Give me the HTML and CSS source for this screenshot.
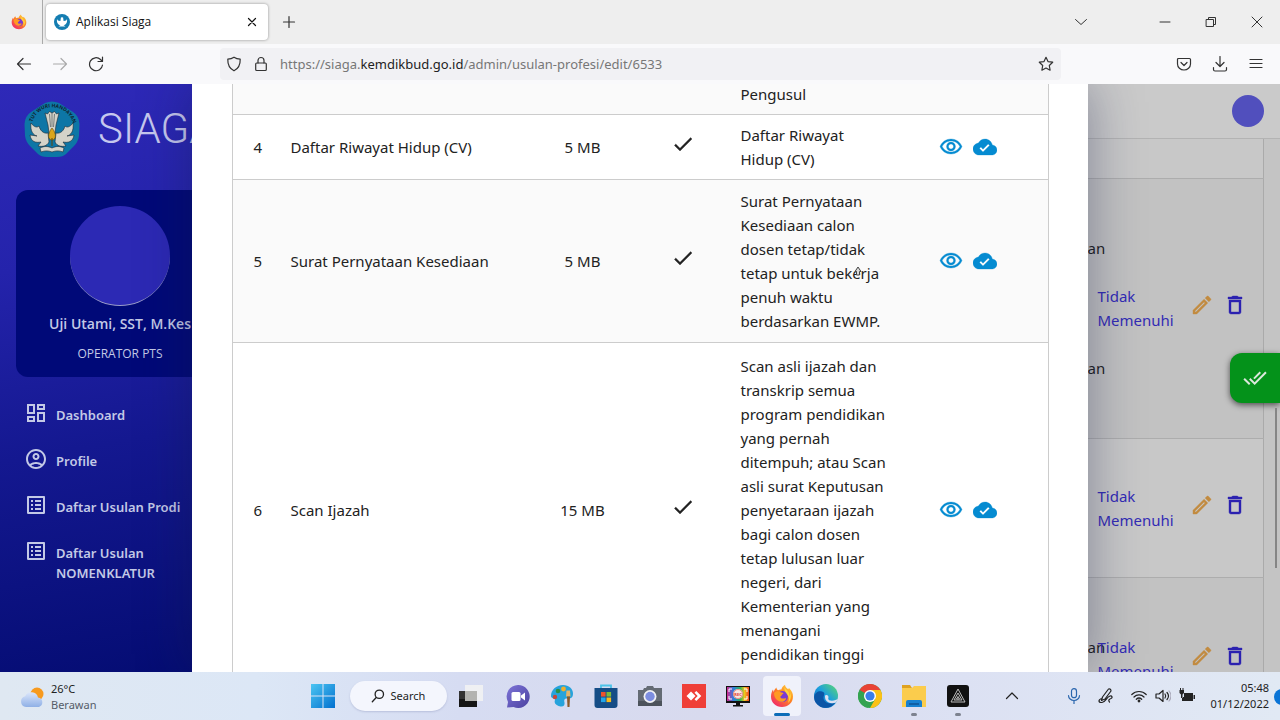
FILE: index.html
```html
<!DOCTYPE html>
<html lang="id">
<head>
<meta charset="utf-8">
<title>Aplikasi Siaga</title>
<link rel="stylesheet" href="styles.css">
</head>
<body>
<svg class="defs" aria-hidden="true">
  <defs>
    <linearGradient id="g-fire" x1="1" y1="0" x2="0.2" y2="1"><stop offset="0" stop-color="#ffe14a"/><stop offset=".45" stop-color="#ff8a1f"/><stop offset="1" stop-color="#f0256b"/></linearGradient>
    <linearGradient id="g-win" x1="0" y1="0" x2="1" y2="1"><stop offset="0" stop-color="#4cc5f2"/><stop offset="1" stop-color="#0270cf"/></linearGradient>
    <linearGradient id="g-edge" x1="0" y1="1" x2="1" y2="0"><stop offset="0" stop-color="#0c4fa5"/><stop offset=".5" stop-color="#1b9de0"/><stop offset="1" stop-color="#5fdc6a"/></linearGradient>
    <linearGradient id="g-chat" x1="0" y1="0" x2="1" y2="1"><stop offset="0" stop-color="#7d74d8"/><stop offset="1" stop-color="#4b419f"/></linearGradient>
    <linearGradient id="g-cloud" x1="0" y1="0" x2="0" y2="1"><stop offset="0" stop-color="#dbe6fb"/><stop offset="1" stop-color="#8fb0e6"/></linearGradient>
    <linearGradient id="g-rec" x1="0" y1="0" x2="1" y2="0"><stop offset="0" stop-color="#d42a8f"/><stop offset=".3" stop-color="#2c7fe0"/><stop offset=".6" stop-color="#2fb457"/><stop offset=".8" stop-color="#f4c51c"/><stop offset="1" stop-color="#ee4425"/></linearGradient>
    <symbol id="firefox" viewBox="0 0 24 24">
      <path fill="url(#g-fire)" d="M12 23C5.700 23 1 18.500 1 12.500c0-3 1-5.500 2-7l.6 2.500C4.300 6 5.500 4.300 6.500 3.500c0 1.300.6 2.200 1.600 2.700 1-.5 2-.7 3.300-.6C12 3.500 13 2 15 .8c0 2 1.500 3 3.200 4.500L19 4c3 3 4 5.500 4 8.500C23 18.500 18.300 23 12 23z"/>
      <circle cx="12.500" cy="12.500" r="5.500" fill="#7a3ad3"/>
      <path fill="#ff9a22" d="M4 9c2-2 5-2.500 7-.5 1.500 0 2.500.5 2.500 1.200-1 .3-1.800 1-2 2-1.500.3-1.500 1.800-.3 2.500 1.800 1 3.500-.2 5 .2-1 2.500-3.500 4-6.200 3.200C6.500 16.500 4 13 4 9z"/>
      <path fill="#ffd23e" d="M14.500 3c.5 2.500 5.500 4 5 9 1-1.500 1-3 .5-4.500 2 4 1 9-2 11.500 2-5 0-7.500-1.500-9.500C15 7.500 14 5.500 14.500 3z"/>
    </symbol>
    <symbol id="crest" viewBox="0 0 56 56">
      <path fill="#0d76a6" d="M21 2Q28-1 35 2L49 11Q55 15 55.500 23L55 35Q54 41 50 45L42 53Q39 56 33 56H23Q17 56 14 53L6 45Q2 41 1 35L.500 23Q1 15 7 11z"/>
      <path id="motto" fill="none" d="M8 22C14 1 42 1 49 22"/>
      <text font-size="5" font-weight="700" font-family="Open Sans, sans-serif" fill="#10222d"><textPath href="#motto" startOffset="1">TUT WURI HANDAYANI</textPath></text>
      <g fill="#d4d3c9" stroke="#1b2630" stroke-width=".6">
        <path d="M21 12l2.500 1 2-2.500 2.500 1.500 2.500-1.500 2 2.500 2.500-1-3 12-1 8h-6l-1-8z"/>
        <path d="M24 32c-5 1-8-3-9-7-2 2-5 1-8-3-1 8 2 12 6 13l-7-1c1 7 6 8 11 7l-3 4c5 1 9 0 11-4z"/>
        <path d="M32 32c5 1 8-3 9-7 2 2 5 1 8-3 1 8-2 12-6 13l7-1c-1 7-6 8-11 7l3 4c-5 1-9 0-11-4z"/>
        <path d="M16 47c4-2 8-2 12 0 4-2 8-2 12 0l-1 4c-4-1.500-7-1.500-11 0-4-1.500-7-1.500-11 0z"/>
      </g>
      <path stroke="#1b2630" stroke-width=".5" d="M25.500 13l1 13M28 12v14M30.500 13l-1 13" />
      <path fill="#d9a51c" stroke="#604708" stroke-width=".6" d="M28 27c5 6 4 12 0 12s-5-6 0-12z"/>
      <path stroke="#604708" d="M28 37v8"/>
    </symbol>
    <symbol id="crest-mini" viewBox="0 0 16 16"><circle cx="8" cy="8" r="8" fill="#147db1"/><path fill="#fff" d="M7 3l1 .8L9 3l.6 4C12 7 12.500 6 13 5c.6 4-1.500 6-3.500 6l2 1.500H4.500l2-1.500C4.500 11 2.400 9 3 5c.5 1 1 2 3.400 2z"/></symbol>
    <symbol id="check" viewBox="0 0 24 24"><path d="M9 16.200L4.800 12l-1.400 1.400L9 19 21 7l-1.400-1.400z"/></symbol>
    <symbol id="eye" viewBox="0 0 24 24"><path d="M12 6c3.790 0 7.170 2.130 8.820 5.500C19.170 14.870 15.790 17 12 17s-7.170-2.130-8.820-5.500C4.830 8.130 8.210 6 12 6m0-2C7 4 2.730 7.110 1 11.500 2.730 15.890 7 19 12 19s9.270-3.110 11-7.500C21.270 7.110 17 4 12 4zm0 5c1.380 0 2.500 1.120 2.500 2.500S13.380 14 12 14s-2.500-1.120-2.500-2.500S10.620 9 12 9m0-2c-2.480 0-4.500 2.020-4.500 4.500S9.520 16 12 16s4.500-2.020 4.500-4.500S14.480 7 12 7z"/></symbol>
    <symbol id="cloud" viewBox="0 0 24 24"><path d="M19.350 10.040C18.670 6.590 15.640 4 12 4 9.110 4 6.600 5.640 5.350 8.040 2.340 8.360 0 10.910 0 14c0 3.310 2.690 6 6 6h13c2.760 0 5-2.240 5-5 0-2.640-2.050-4.780-4.650-4.960zM10 17l-3.500-3.500 1.410-1.410L10 14.170 15.180 9l1.410 1.410L10 17z"/></symbol>
    <symbol id="pencil" viewBox="0 0 24 24"><path d="M14.060 9.020l.92.920L5.920 19H5v-.92l9.060-9.060M17.660 3c-.25 0-.51.1-.7.290l-1.830 1.830 3.750 3.750 1.830-1.830c.39-.39.39-1.020 0-1.410l-2.340-2.340c-.2-.2-.45-.29-.71-.29zm-3.600 3.190L3 17.250V21h3.750L17.810 9.940l-3.750-3.750z"/></symbol>
    <symbol id="trash" viewBox="0 0 24 24"><path d="M6 19c0 1.100.9 2 2 2h8c1.100 0 2-.9 2-2V7H6v12zM8 9h8v10H8V9zm7.500-5l-1-1h-5l-1 1H5v2h14V4z"/></symbol>
    <symbol id="list" viewBox="0 0 24 24"><path d="M19 5v14H5V5h14m1.100-2H3.900c-.5 0-.9.400-.9.900v16.200c0 .4.400.9.900.9h16.200c.4 0 .9-.5.900-.9V3.900c0-.5-.5-.9-.9-.9zM11 7h6v2h-6V7zm0 4h6v2h-6v-2zm0 4h6v2h-6zM7 7h2v2H7zm0 4h2v2H7zm0 4h2v2H7z"/></symbol>
  </defs>
</svg>

<header class="tabstrip">
  <button class="pinned" aria-label="Firefox View"><svg class="i16"><use href="#firefox"/></svg></button>
  <div class="tab">
    <svg class="i16"><use href="#crest-mini"/></svg>
    <span class="tab-title">Aplikasi Siaga</span>
    <button class="tab-close" aria-label="Tutup tab"><svg class="line i16" viewBox="0 0 16 16"><path d="M4.500 4.500l7 7M11.500 4.500l-7 7"/></svg></button>
  </div>
  <button class="newtab" aria-label="Tab baru"><svg class="line i16" viewBox="0 0 16 16"><path d="M8 2.500v11M2.500 8h11"/></svg></button>
  <div class="window-controls">
    <button class="all-tabs" aria-label="Daftar tab"><svg class="line i16" viewBox="0 0 16 16"><path d="M2.500 5.500L8 10.500l5.500-5"/></svg></button>
    <button aria-label="Kecilkan"><svg class="line i16" viewBox="0 0 16 16"><path d="M3 8h10"/></svg></button>
    <button aria-label="Pulihkan"><svg class="line i16" viewBox="0 0 16 16"><path d="M3.500 5.500h7v7h-7zM5.500 5.500v-2h7v7h-2"/></svg></button>
    <button aria-label="Tutup"><svg class="line i16" viewBox="0 0 16 16"><path d="M3 3l10 10M13 3L3 13"/></svg></button>
  </div>
</header>

<nav class="toolbar" aria-label="Navigasi peramban">
  <div class="nav-buttons">
    <button aria-label="Kembali"><svg class="line i16" viewBox="0 0 16 16"><path d="M14.500 8H1.500M7 2.500L1.500 8 7 13.500"/></svg></button>
    <button class="off" aria-label="Maju" disabled><svg class="line i16" viewBox="0 0 16 16"><path d="M1.500 8h13M9 2.500L14.500 8 9 13.500"/></svg></button>
    <button aria-label="Muat ulang"><svg class="line i16" viewBox="0 0 16 16"><path d="M14.500 9A6.500 6.500 0 1 1 12.500 3.500L14 5M14.500 1v4.500H10"/></svg></button>
  </div>
  <div class="urlbar">
    <svg class="line i16" viewBox="0 0 16 16"><path d="M8 1.200c2 1.300 4 1.800 6.200 2 .2 5.500-1.700 9.300-6.200 11.600C3.500 12.500 1.600 8.700 1.800 3.200 4 3 6 2.500 8 1.200z"/></svg>
    <svg class="line i16" viewBox="0 0 16 16"><rect x="2.700" y="7" width="10.600" height="7.500" rx="1"/><path d="M5 7V4.500a3 3 0 0 1 6 0V7"/></svg>
    <div class="url" role="textbox" contenteditable="true" aria-label="Alamat" spellcheck="false">https://siaga.<b>kemdikbud.go.id</b>/admin/usulan-profesi/edit/6533</div>
    <button aria-label="Tandai halaman"><svg class="line i16" viewBox="0 0 16 16"><path d="M8 1.300l2 4.300 4.700.6-3.400 3.300.8 4.700L8 12l-4.100 2.200.8-4.700L1.300 6.200 6 5.600z"/></svg></button>
  </div>
  <div class="tools">
    <button aria-label="Pocket"><svg class="line i16" viewBox="0 0 16 16"><path d="M2.500 2.500h11q1 0 1 1V8a6.500 6 0 0 1-13 0V3.500q0-1 1-1zM5 6.500l3 3 3-3"/></svg></button>
    <button aria-label="Unduhan"><svg class="line i16" viewBox="0 0 16 16"><path d="M8 .5v10M4 6.500l4 4 4-4M1.500 11.500v2q0 1.500 1.500 1.500h10q1.500 0 1.500-1.500v-2"/></svg></button>
    <button aria-label="Menu"><svg class="line i16" viewBox="0 0 16 16"><path d="M2 3.500h12M2 7.500h12M2 11.500h12"/></svg></button>
  </div>
</nav>

<main class="page">
  <aside class="sidebar">
    <div class="brand"><svg class="crest"><use href="#crest"/></svg><span>SIAGA</span></div>
    <section class="usercard">
      <div class="portrait"></div>
      <strong>Uji Utami, SST, M.Kes</strong>
      <span>OPERATOR PTS</span>
    </section>
    <nav class="menu" aria-label="Menu utama">
      <a href="#"><svg viewBox="0 0 24 24"><path d="M19 5v2h-4V5h4M9 5v6H5V5h4m10 8v6h-4v-6h4M9 17v2H5v-2h4M21 3h-8v6h8V3zM11 3H3v10h8V3zm10 8h-8v10h8V11zm-10 4H3v6h8v-6z"/></svg>Dashboard</a>
      <a href="#"><svg viewBox="0 0 24 24"><path d="M12 2C6.480 2 2 6.480 2 12s4.480 10 10 10 10-4.480 10-10S17.520 2 12 2zM7.350 18.500C8.660 17.560 10.260 17 12 17s3.340.56 4.650 1.500C15.340 19.440 13.740 20 12 20s-3.340-.56-4.650-1.500zm10.790-1.380C16.450 15.800 14.320 15 12 15s-4.450.8-6.140 2.120C4.700 15.730 4 13.950 4 12c0-4.420 3.580-8 8-8s8 3.580 8 8c0 1.950-.7 3.730-1.860 5.120zM12 6c-1.930 0-3.500 1.570-3.500 3.500S10.070 13 12 13s3.500-1.570 3.500-3.500S13.930 6 12 6zm0 5c-.83 0-1.500-.67-1.500-1.500S11.170 8 12 8s1.500.67 1.500 1.500S12.830 11 12 11z"/></svg>Profile</a>
      <a href="#"><svg><use href="#list"/></svg>Daftar Usulan Prodi</a>
      <a href="#"><svg><use href="#list"/></svg>Daftar Usulan NOMENKLATUR</a>
    </nav>
  </aside>

  <div class="content">
    <div class="appbar"><button class="avatar" aria-label="Akun"></button></div>
    <table class="results">
      <colgroup><col><col class="w-tail"><col class="w-status"><col class="w-tools"></colgroup>
      <tbody>
        <tr class="head"><td></td><td></td><td></td><td></td></tr>
        <tr class="tall"><td></td><td>an<br><br><br><br><br>an</td><td class="status">Tidak Memenuhi</td><td><div class="row-tools"><button class="edit" aria-label="Ubah"><svg><use href="#pencil"/></svg></button><button class="del" aria-label="Hapus"><svg><use href="#trash"/></svg></button></div></td></tr>
        <tr class="mid"><td></td><td></td><td class="status">Tidak Memenuhi</td><td><div class="row-tools"><button class="edit" aria-label="Ubah"><svg><use href="#pencil"/></svg></button><button class="del" aria-label="Hapus"><svg><use href="#trash"/></svg></button></div></td></tr>
        <tr class="low"><td></td><td>an<br><br></td><td class="status">Tidak Memenuhi</td><td><div class="row-tools"><button class="edit" aria-label="Ubah"><svg><use href="#pencil"/></svg></button><button class="del" aria-label="Hapus"><svg><use href="#trash"/></svg></button></div></td></tr>
      </tbody>
    </table>
  </div>

  <section class="dialog" role="dialog" aria-label="Dokumen usulan">
    <table class="docs">
      <colgroup><col class="c-no"><col class="c-name"><col class="c-size"><col class="c-req"><col class="c-desc"><col class="c-act"></colgroup>
      <tbody>
        <tr class="r3"><td></td><td></td><td></td><td></td><td>Pengusul</td><td></td></tr>
        <tr class="r4"><td>4</td><td>Daftar Riwayat Hidup (CV)</td><td>5 MB</td><td><svg><use href="#check"/></svg></td><td>Daftar Riwayat Hidup (CV)</td><td><div class="acts"><button aria-label="Lihat"><svg><use href="#eye"/></svg></button><button aria-label="Unggah"><svg><use href="#cloud"/></svg></button></div></td></tr>
        <tr class="r5"><td>5</td><td>Surat Pernyataan Kesediaan</td><td>5 MB</td><td><svg><use href="#check"/></svg></td><td>Surat Pernyataan Kesediaan calon dosen tetap/tidak tetap untuk bekerja penuh waktu berdasarkan EWMP.</td><td><div class="acts"><button aria-label="Lihat"><svg><use href="#eye"/></svg></button><button aria-label="Unggah"><svg><use href="#cloud"/></svg></button></div></td></tr>
        <tr class="r6"><td>6</td><td>Scan Ijazah</td><td>15 MB</td><td><svg><use href="#check"/></svg></td><td>Scan asli ijazah dan transkrip semua program pendidikan yang pernah ditempuh; atau Scan asli surat Keputusan penyetaraan ijazah bagi calon dosen tetap lulusan luar negeri, dari Kementerian yang menangani pendidikan tinggi</td><td><div class="acts"><button aria-label="Lihat"><svg><use href="#eye"/></svg></button><button aria-label="Unggah"><svg><use href="#cloud"/></svg></button></div></td></tr>
      </tbody>
    </table>
  </section>

  <svg class="pointer" viewBox="0 0 8 10"><path d="M4 1l3 4.500H5.500V9h-3V5.500H1z"/></svg>
  <button class="verify" aria-label="Verifikasi"><svg viewBox="0 0 24 24"><path d="M18 7l-1.410-1.410-6.340 6.340 1.410 1.410L18 7zm4.240-1.410L11.660 16.170 7.480 12l-1.410 1.410L11.660 19l12-12-1.420-1.410zM.41 13.410L6 19l1.410-1.410L1.830 12 .41 13.410z"/></svg></button>
  <div class="scrollthumb"></div>
</main>

<footer class="taskbar">
  <button class="weather">
    <svg viewBox="0 0 24 22"><circle cx="17" cy="8" r="6.500" fill="#f79a1e"/><path fill="url(#g-cloud)" d="M6 21a5.500 5.500 0 0 1-.8-10.800A6.800 6.800 0 0 1 18 11.500 4.900 4.900 0 0 1 19 21z"/></svg>
    <span>26°C<small>Berawan</small></span>
  </button>
  <div class="apps">
    <button aria-label="Mulai"><svg viewBox="0 0 24 24"><path fill="url(#g-win)" d="M0 0h11.500v11.500H0zM12.500 0H24v11.500H12.500zM0 12.500h11.500V24H0zM12.500 12.500H24V24H12.500z"/></svg></button>
    <button class="search"><svg class="line" viewBox="0 0 16 16"><circle cx="9.500" cy="6" r="4.800"/><path d="M6 9.800L1.500 14.500"/></svg>Search</button>
    <button class="views" aria-label="Tampilan tugas"><svg viewBox="0 0 24 24"><path fill="#333" d="M0 7h18v16H0z"/><path fill="#151515" d="M0 15h18v8H0z"/><path fill="#f5f5f3" d="M6 1h18v16H6z" opacity=".8"/><path fill="#b3b3b0" d="M6 7h12v10H6z"/></svg></button>
    <button aria-label="Obrolan"><svg viewBox="0 0 24 24"><path fill="url(#g-chat)" d="M12 1a11.500 11.500 0 1 1-4.500 22L1 23.500l1-5.500A11.500 11.500 0 0 1 12 1z"/><rect x="5.500" y="8" width="9" height="9" rx="1.500" fill="#fff"/><path fill="#fff" d="M15 11.500L19 8.500v8l-4-3z"/></svg></button>
    <button aria-label="Paint"><svg viewBox="0 0 24 24"><path fill="#27a3dc" d="M13 1c6 0 10 4 10 8.500 0 5-3 5-6 5s-3 2-2.500 4c.5 2.500-1 4.500-4 4C5 21.500 4 18 5 16c.6-2-4-1-4-4C1 6 6 1 13 1z"/><circle cx="5" cy="13" r="2.200" fill="#c4473c"/><circle cx="8" cy="7" r="2.300" fill="#2b8f48"/><circle cx="13.500" cy="5" r="2.400" fill="#f0b02b"/><path fill="#e5b46a" d="M16.500 6.500h3.500l.5 6h-4.500z"/><path fill="#8b5a2b" d="M17 12.500h3L19.500 23h-2z"/></svg></button>
    <button aria-label="Microsoft Store"><svg viewBox="0 0 24 24"><path fill="none" stroke="#4cc3e8" stroke-width="1.800" d="M7 5V1.500h10V5"/><path fill="#154d86" d="M.5 4h23v17q0 3-3 3h-17q-3 0-3-3z"/><path fill="#f0532c" d="M7 8h4.600v4.600H7z"/><path fill="#7dbb3a" d="M12.500 8h4.600v4.600h-4.600z"/><path fill="#22a7ea" d="M7 13.500h4.600v4.600H7z"/><path fill="#fbbc1b" d="M12.500 13.500h4.600v4.600h-4.600z"/></svg></button>
    <button aria-label="Kamera"><svg viewBox="0 0 24 24"><path fill="#646b74" d="M0 6h5l1-2h2l1-2h6l1 2h8v18H0z"/><path fill="#4c535b" d="M0 17h24v5H0z"/><circle cx="12" cy="12.500" r="6.500" fill="#f0f1f5"/><circle cx="12" cy="12.500" r="4.700" fill="#7d8ee0"/></svg></button>
    <button aria-label="AnyDesk"><svg viewBox="0 0 24 24"><path fill="#ef3f38" d="M0 0h24v24H0z"/><path fill="#fff" d="M9 7.500l4.500 4.500L9 16.500 4.500 12zM12.500 8.800L14.300 7l5 5-5 5-1.800-1.800 3.200-3.200z"/></svg></button>
    <button aria-label="Perekam layar"><svg viewBox="0 0 24 24"><path fill="#111" d="M0 2h24v17H0z"/><path fill="url(#g-rec)" d="M1 3h22v14H1z"/><circle cx="12" cy="10" r="5" fill="#f6e9e2"/><circle cx="12" cy="10" r="4.500" fill="none" stroke="#ea5146" stroke-width=".6"/><text x="12" y="11.500" font-size="4" font-weight="700" text-anchor="middle" fill="#e2372e">REC</text><path stroke="#fff" fill="none" d="M3 8V5h3M18 5h3v3M3 12v3h3M18 15h3v-3"/><path fill="#111" d="M10 19h4v2h3v1.500H7V21h3z"/></svg></button>
    <button class="active" aria-label="Firefox"><svg><use href="#firefox"/></svg></button>
    <button aria-label="Edge"><svg viewBox="0 0 24 24"><circle cx="12" cy="12" r="12" fill="url(#g-edge)"/><path fill="#0b55a6" d="M.2 13C1 8 5 6.500 8 7.500 13 9 8 12 10 16c2 4 8 4 11.500 2.500C18 24 11 25 6 22.400 2 20 0 17 .2 13z"/><path fill="#dce0f2" d="M11 12.500c0-1.600 2.200-2 3.200-.5.8 1.500-.5 2.500.3 3.500 1 1.500 4.500 1.500 7 .5l2.500-1-2 3.500c-4 1.500-9 .5-10.500-3-.3-1.200-.5-2-.5-3z"/></svg></button>
    <button aria-label="Chrome"><svg viewBox="0 0 24 24"><circle cx="12" cy="12" r="12" fill="#34a350"/><path fill="#e94235" d="M12 12L1.600 6A12 12 0 0 1 22.400 6z"/><path fill="#fbc116" d="M12 6h10.400A12 12 0 0 1 12 24l5.200-9z"/><path fill="#34a350" d="M1.600 6l5.200 9 5.200 3-2 5.800A12 12 0 0 1 1.600 6z"/><circle cx="12" cy="12" r="6" fill="#fff"/><circle cx="12" cy="12" r="4.600" fill="#3a7eea"/></svg></button>
    <button class="open" aria-label="File Explorer"><svg viewBox="0 0 24 24"><path fill="#dfa221" d="M0 1h8l2 3H0z"/><path fill="#fbcc4c" d="M0 4h10l2-2h12v21H0z"/><path fill="#1781d1" d="M4 23v-5q0-2 2-2h12q2 0 2 2v5z"/><path fill="#0f5fa5" d="M7 19h10v2H7z"/></svg></button>
    <button class="open" aria-label="Aplikasi"><svg viewBox="0 0 24 24"><rect x="1" y="1" width="22" height="22" rx="3" fill="#111"/><path stroke="#bbb" fill="none" d="M12 5l7 13H5zM12 9l4 7H8zM12 12.500l1.500 2.500h-3z"/></svg></button>
  </div>
  <div class="tray">
    <button class="more" aria-label="Ikon tersembunyi"><svg class="line" viewBox="0 0 16 16"><path d="M2.500 10.500L8 5l5.500 5.500"/></svg></button>
    <button class="mic" aria-label="Mikrofon"><svg class="line" viewBox="0 0 16 16"><rect x="5.500" y=".7" width="5" height="9" rx="2.500"/><path d="M2.500 7.500a5.500 5 0 0 0 11 0M8 12.500V16"/></svg></button>
    <button class="pen" aria-label="Pena"><svg class="line" viewBox="0 0 16 16"><path d="M3.500 12.500L4.500 9l6-8q2.500-.5 2.500 2L7 11zM3.500 12.500l3.500-1.500M4 10.500c-4 1-4 4 0 4 4-.5 4-5 8-6.500 2-.5 3 1.500 1 2.500-2 .5-3 2-1.500 3.500"/></svg></button>
    <button class="system" aria-label="Jaringan, suara, baterai">
      <svg class="line" viewBox="0 0 16 16"><path d="M.8 6.500a10.200 10.200 0 0 1 14.400 0M3 9a7 7 0 0 1 10 0M5.300 11.300a3.900 3.900 0 0 1 5.400 0"/><circle cx="8" cy="13" r=".8"/></svg>
      <svg class="line" viewBox="0 0 16 16"><path d="M1 6h3l4-3.500v11L4 10H1zM10 6q1.500 2 0 4M12 4.500q3 3.500 0 7"/><path stroke="#aab" d="M14 3q4 5 0 10"/></svg>
      <svg viewBox="0 0 16 16"><path d="M5 5h9v8H3v-3h1V9h1zM14.500 7H16v4h-1.500zM.5 2H1V0h1v2h1.500V0h1v2H5v3L3.500 6.500V10H2V6.500L.5 5z"/></svg>
    </button>
    <button class="clock"><time>05:48</time><time>01/12/2022</time></button>
    <span class="badge"></span>
  </div>
</footer>
</body>
</html>
```
FILE: styles.css
```css
* { box-sizing: border-box; }
body {
  margin: 0;
  height: 100vh;
  display: flex;
  flex-direction: column;
  overflow: hidden;
  font-family: "Noto Sans", "Open Sans", sans-serif;
  font-size: 15px;
  line-height: 24px;
  color: #222;
}
button {
  border: 0;
  padding: 0;
  background: none;
  font: inherit;
  color: inherit;
  display: flex;
  align-items: center;
  justify-content: center;
}
svg { display: block; fill: currentColor; flex: none; width: 24px; height: 24px; }
svg.line { fill: none; stroke: currentColor; stroke-width: 1.2; stroke-linejoin: round; stroke-linecap: round; }
svg.i16 { width: 16px; height: 16px; }
svg.defs { position: absolute; width: 0; height: 0; }

/* Browser chrome */
.tabstrip { flex: none; height: 44px; display: flex; align-items: center; background: #eee; color: #333; }
.pinned { width: 43px; height: 44px; border-right: 1px solid #aaa; padding-right: 4px; }
.tab {
  width: 222px;
  height: 36px;
  margin-left: 3px;
  padding: 0 8px;
  display: flex;
  align-items: center;
  gap: 6px;
  border-radius: 4px;
  background: #fff;
  box-shadow: 0 0 3px rgba(0, 0, 0, .4);
  font-family: "Open Sans", sans-serif;
  font-size: 12px;
  color: #111;
}
.tab-title { flex: 1; }
.newtab { width: 42px; height: 36px; }
.window-controls { margin-left: auto; display: flex; }
.window-controls button { width: 46px; height: 36px; }
.window-controls svg { stroke-width: 1; }
.window-controls .all-tabs { margin-right: 38px; }
.toolbar { flex: none; height: 40px; display: flex; align-items: center; background: #f9f9fb; color: #333; }
.nav-buttons { width: 220px; padding-left: 6px; display: flex; }
.nav-buttons button, .tools button { width: 36px; height: 36px; }
.nav-buttons .off { color: #aaa; }
.urlbar {
  flex: 1;
  height: 32px;
  padding: 0 7px 0 6px;
  display: flex;
  align-items: center;
  gap: 11px;
  border-radius: 4px;
  background: #f1f1f4;
}
.url { flex: 1; font-size: 13px; color: #777; white-space: nowrap; outline: 0; }
.url b { font-weight: 400; color: #222; }
.tools { width: 219px; padding-right: 6px; display: flex; justify-content: flex-end; }

/* Web page */
.page { flex: 1; min-height: 0; position: relative; display: flex; overflow: hidden; background: #c4c4c4; }
.sidebar {
  width: 240px;
  padding: 16px;
  background: linear-gradient(170deg, #2e29b8 0%, #2423ab 30%, #141890 60%, #040c72 100%);
  color: #c3c9e6;
}
.brand { display: flex; align-items: center; gap: 18px; padding-left: 8px; height: 58px; font: 300 42px/58px Roboto, sans-serif; color: #c6c8ee; }
.crest { width: 56px; height: 56px; }
.usercard {
  margin: 32px 0 25px;
  padding: 16px 0 11px;
  display: flex;
  flex-direction: column;
  align-items: center;
  border-radius: 12px;
  background: #000978;
  font-family: "Open Sans", sans-serif;
}
.portrait { width: 100px; height: 100px; border-radius: 50%; background: #2c29b4; border-bottom: 1px solid #9a9cc8; }
.usercard strong { margin-top: 6px; font-size: 14px; font-weight: 600; white-space: nowrap; }
.usercard span { margin-top: 6px; font-size: 12px; }
.menu { display: flex; flex-direction: column; gap: 22px; padding: 0 8px; }
.menu a { display: flex; gap: 8px; color: inherit; text-decoration: none; font-size: 13px; font-weight: 600; line-height: 20px; padding-top: 3px; min-height: 24px; }
.menu svg { margin-top: -4px; }
.content { flex: 1; min-width: 0; padding-right: 16px; }
.appbar { height: 55px; margin-right: -16px; padding-right: 16px; display: flex; align-items: center; justify-content: flex-end; background: #cacaca; border-bottom: 1px solid #b3b3b3; }
.avatar { width: 32px; height: 32px; border-radius: 50%; background: #514fbd; }
.results { width: 100%; table-layout: fixed; border-collapse: collapse; border-right: 1px solid #aaa; }
.results td { padding: 0; border-bottom: 1px solid #adadad; }
.w-tail { width: 10px; }
.w-status { width: 87px; }
.w-tools { width: 79px; }
.results .head { height: 39px; background: #c8c8c8; }
.results .tall { height: 260px; background: #c2c2c2; }
.results .mid { height: 139px; background: #c8c8c8; }
.results .low { height: 163px; background: #c2c2c2; }
.results .status { color: #332cb5; }
.row-tools { display: flex; gap: 9px; padding: 0 0 6px 5px; }
.row-tools svg { stroke: currentColor; stroke-width: .4; }
.edit { color: #c28b40; }
.del { color: #2c22b0; }

.dialog {
  position: absolute;
  top: 0;
  bottom: 0;
  left: 15%;
  right: 15%;
  padding: 0 40px;
  overflow: hidden;
  background: #fff;
  box-shadow: 0 0 50px rgba(20, 28, 70, .4);
}
.docs { width: 100%; margin-top: -3px; table-layout: fixed; border-collapse: collapse; border: 1px solid #ccc; }
.docs td { padding: 0 16px; border-bottom: 1px solid #ccc; }
.docs td:nth-child(1), .docs td:nth-child(3), .docs td:nth-child(4) { padding: 0; text-align: center; }
.docs td:nth-child(1) { padding-left: 8px; }
.docs td:nth-child(4) svg { margin: -6px auto 0; }
.docs td:nth-child(6) { padding: 0 0 0 34px; }
.c-no { width: 42px; }
.c-name { width: 250px; }
.c-size { width: 116px; }
.c-req { width: 84px; }
.c-desc { width: 180px; }
.c-act { width: 144px; }
.r3 { height: 33px; }
.r4 { height: 65px; }
.r5 { height: 163px; }
.r6 { height: 334px; }
.docs .r3 td { padding-bottom: 8px; }
.r3, .r5 { background: #fafafa; }
.acts { display: flex; gap: 10px; color: #058bd1; }
.docs svg { stroke: currentColor; stroke-width: .3; }

.pointer { position: absolute; left: 67%; top: 182px; width: 8px; height: 10px; margin-left: -4px; fill: #ddd; stroke: #444; }
.verify {
  position: absolute;
  right: 0;
  top: 269px;
  width: 50px;
  height: 50px;
  border-radius: 12px 0 0 12px;
  background: #04921a;
  color: #dce8dc;
  box-shadow: 0 2px 6px rgba(0, 0, 0, .6);
}
.scrollthumb { position: absolute; right: 3px; top: 324px; width: 2px; height: 160px; background: #858585; }

/* Taskbar */
.taskbar {
  flex: none;
  height: 48px;
  display: grid;
  grid-template-columns: 1fr auto 1fr;
  background: linear-gradient(90deg, #dfe8f2, #dce7f6 20%, #d6dcf2 36%, #d8daee 55%, #dce1f3 75%, #e1e9f4);
  font-size: 11px;
  line-height: 16px;
}
.weather { justify-self: start; margin: 2px 0 0 20px; gap: 7px; text-align: left; }
.weather small { display: block; font-size: 11px; color: #555c68; }
.apps { display: flex; align-items: center; }
.apps button { width: 44px; height: 40px; border-radius: 4px; position: relative; }
.apps .search { width: 97px; height: 30px; margin: 0 5px; gap: 6px; border-radius: 15px; background: #f4f6fd; color: #222; box-shadow: 0 1px 2px rgba(90, 100, 150, .25); }
.search svg { width: 14px; height: 14px; stroke-width: 1.5; }
.apps .views { padding-right: 6px; }
.apps .active { width: 38px; margin: 0 3px; background: #f0f2fb; }
.active::after, .open::after { content: ""; position: absolute; bottom: 0; width: 6px; height: 3px; border-radius: 2px; background: #7d828f; }
.active::after { width: 16px; background: #0c6cb8; }
.tray { display: flex; align-items: center; justify-content: flex-end; position: relative; padding-right: 11px; }
.tray svg { width: 16px; height: 16px; }
.more { width: 24px; height: 32px; margin: 0 auto 0 20px; }
.mic { width: 30px; height: 32px; color: #2a66ae; }
.pen { width: 34px; height: 32px; }
.system { gap: 8px; height: 32px; margin: 0 15px 0 8px; }
.clock { flex-direction: column; align-items: flex-end; }
.badge { position: absolute; right: -10px; top: 17px; width: 16px; height: 16px; border-radius: 50%; background: #0a74d6; }
```
